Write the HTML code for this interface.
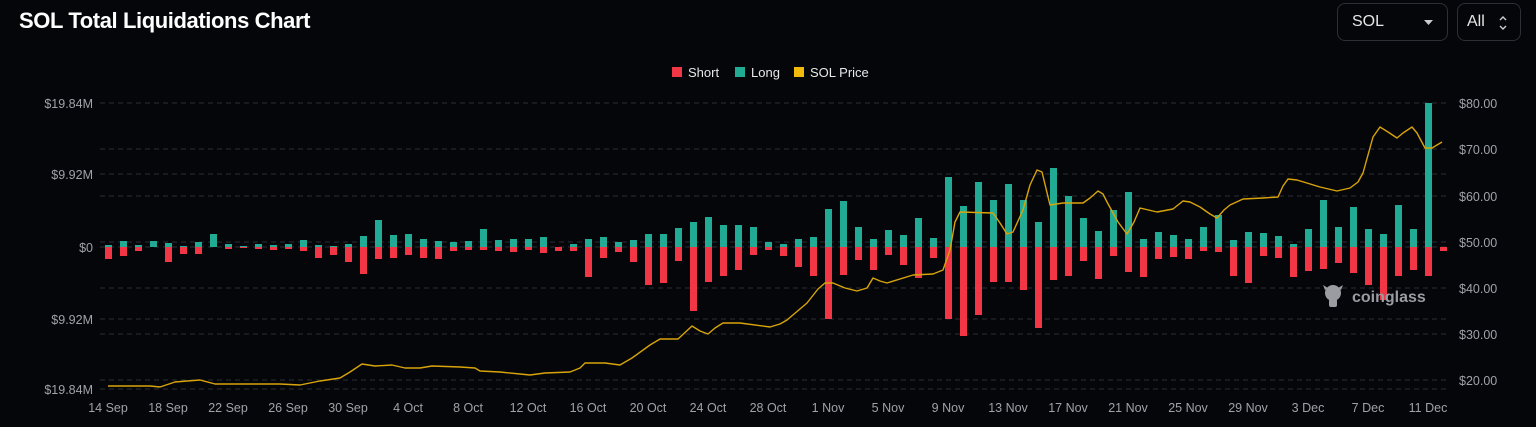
<!DOCTYPE html>
<html><head><meta charset="utf-8"><style>
html,body{margin:0;padding:0;background:#05060a;width:1536px;height:427px;overflow:hidden;font-family:"Liberation Sans",sans-serif}
.t{position:absolute;left:19px;top:8px;color:#fff;font-size:22px;font-weight:bold;letter-spacing:-0.4px}
.box{position:absolute;top:3px;height:38px;border:1px solid #2c2f36;border-radius:8px;box-sizing:border-box;color:#e6e6e6;font-size:16px;line-height:36px}
</style></head><body>
<div class="t">SOL Total Liquidations Chart</div>
<div class="box" style="left:1337px;width:111px;padding-left:14px">SOL<svg style="position:absolute;left:86px;top:16px" width="10" height="6"><path d="M0 0h9L4.5 5z" fill="#ccc"/></svg></div>
<div class="box" style="left:1457px;width:64px;padding-left:9px">All<svg style="position:absolute;left:40px;top:10px" width="10" height="18"><path d="M2 6l3-3 3 3M2 12l3 3 3-3" stroke="#ccc" stroke-width="1.4" fill="none"/></svg></div>
<svg width="1536" height="427" style="position:absolute;left:0;top:0" font-family="Liberation Sans, sans-serif">
<g fill="#e8e8e8" font-size="13">
<rect x="672" y="67" width="10" height="10" fill="#f23645"/><text x="688" y="77">Short</text>
<rect x="735" y="67" width="10" height="10" fill="#22ab94"/><text x="751" y="77">Long</text>
<rect x="794" y="67" width="10" height="10" fill="#f0b90b"/><text x="810" y="77">SOL Price</text>
</g>
<g stroke="#2a2d33" stroke-dasharray="5 4" stroke-width="1">
<path d="M100 103H1448M100 174H1448M100 247H1448M100 319H1448M100 389H1448M100 149H1448M100 196H1448M100 242H1448M100 288H1448M100 334H1448M100 380H1448"/>
</g>
<g fill="#a0a2a8" font-size="12.5" text-anchor="end">
<text x="93" y="108">$19.84M</text><text x="93" y="179">$9.92M</text><text x="93" y="252">$0</text><text x="93" y="324">$9.92M</text><text x="93" y="394">$19.84M</text>
</g>
<g fill="#a0a2a8" font-size="12.5">
<text x="1459" y="108">$80.00</text><text x="1459" y="154">$70.00</text><text x="1459" y="201">$60.00</text><text x="1459" y="247">$50.00</text><text x="1459" y="293">$40.00</text><text x="1459" y="339">$30.00</text><text x="1459" y="385">$20.00</text>
</g>
<g fill="#a0a2a8" font-size="12.5" text-anchor="middle">
<text x="108" y="412">14 Sep</text><text x="168" y="412">18 Sep</text><text x="228" y="412">22 Sep</text><text x="288" y="412">26 Sep</text><text x="348" y="412">30 Sep</text><text x="408" y="412">4 Oct</text><text x="468" y="412">8 Oct</text><text x="528" y="412">12 Oct</text><text x="588" y="412">16 Oct</text><text x="648" y="412">20 Oct</text><text x="708" y="412">24 Oct</text><text x="768" y="412">28 Oct</text><text x="828" y="412">1 Nov</text><text x="888" y="412">5 Nov</text><text x="948" y="412">9 Nov</text><text x="1008" y="412">13 Nov</text><text x="1068" y="412">17 Nov</text><text x="1128" y="412">21 Nov</text><text x="1188" y="412">25 Nov</text><text x="1248" y="412">29 Nov</text><text x="1308" y="412">3 Dec</text><text x="1368" y="412">7 Dec</text><text x="1428" y="412">11 Dec</text>
</g>
<g fill="#22ab94">
<rect x="105" y="245" width="7" height="2"/><rect x="120" y="241" width="7" height="6"/><rect x="135" y="245" width="7" height="2"/><rect x="150" y="241" width="7" height="6"/><rect x="165" y="243" width="7" height="4"/><rect x="180" y="246" width="7" height="1"/><rect x="195" y="242" width="7" height="5"/><rect x="210" y="234" width="7" height="13"/><rect x="225" y="244" width="7" height="3"/><rect x="240" y="246" width="7" height="1"/>
<rect x="255" y="244" width="7" height="3"/><rect x="270" y="245" width="7" height="2"/><rect x="285" y="244" width="7" height="3"/><rect x="300" y="240" width="7" height="7"/><rect x="315" y="245" width="7" height="2"/><rect x="330" y="246" width="7" height="1"/><rect x="345" y="244" width="7" height="3"/><rect x="360" y="236" width="7" height="11"/><rect x="375" y="220" width="7" height="27"/><rect x="390" y="235" width="7" height="12"/>
<rect x="405" y="234" width="7" height="13"/><rect x="420" y="239" width="7" height="8"/><rect x="435" y="241" width="7" height="6"/><rect x="450" y="242" width="7" height="5"/><rect x="465" y="241" width="7" height="6"/><rect x="480" y="229" width="7" height="18"/><rect x="495" y="240" width="7" height="7"/><rect x="510" y="239" width="7" height="8"/><rect x="525" y="239" width="7" height="8"/><rect x="540" y="237" width="7" height="10"/>
<rect x="570" y="244" width="7" height="3"/><rect x="585" y="239" width="7" height="8"/><rect x="600" y="237" width="7" height="10"/><rect x="615" y="242" width="7" height="5"/><rect x="630" y="240" width="7" height="7"/><rect x="645" y="234" width="7" height="13"/><rect x="660" y="234" width="7" height="13"/><rect x="675" y="228" width="7" height="19"/><rect x="690" y="222" width="7" height="25"/><rect x="705" y="217" width="7" height="30"/>
<rect x="720" y="225" width="7" height="22"/><rect x="735" y="225" width="7" height="22"/><rect x="750" y="227" width="7" height="20"/><rect x="765" y="242" width="7" height="5"/><rect x="780" y="244" width="7" height="3"/><rect x="795" y="239" width="7" height="8"/><rect x="810" y="237" width="7" height="10"/><rect x="825" y="209" width="7" height="38"/><rect x="840" y="201" width="7" height="46"/><rect x="855" y="227" width="7" height="20"/>
<rect x="870" y="239" width="7" height="8"/><rect x="885" y="230" width="7" height="17"/><rect x="900" y="235" width="7" height="12"/><rect x="915" y="218" width="7" height="29"/><rect x="930" y="238" width="7" height="9"/><rect x="945" y="177" width="7" height="70"/><rect x="960" y="206" width="7" height="41"/><rect x="975" y="182" width="7" height="65"/><rect x="990" y="200" width="7" height="47"/><rect x="1005" y="184" width="7" height="63"/>
<rect x="1020" y="200" width="7" height="47"/><rect x="1035" y="222" width="7" height="25"/><rect x="1050" y="168" width="7" height="79"/><rect x="1065" y="196" width="7" height="51"/><rect x="1080" y="218" width="7" height="29"/><rect x="1095" y="231" width="7" height="16"/><rect x="1110" y="210" width="7" height="37"/><rect x="1125" y="192" width="7" height="55"/><rect x="1140" y="239" width="7" height="8"/><rect x="1155" y="232" width="7" height="15"/>
<rect x="1170" y="235" width="7" height="12"/><rect x="1185" y="239" width="7" height="8"/><rect x="1200" y="227" width="7" height="20"/><rect x="1215" y="215" width="7" height="32"/><rect x="1230" y="240" width="7" height="7"/><rect x="1245" y="232" width="7" height="15"/><rect x="1260" y="233" width="7" height="14"/><rect x="1275" y="236" width="7" height="11"/><rect x="1290" y="244" width="7" height="3"/><rect x="1305" y="229" width="7" height="18"/>
<rect x="1320" y="200" width="7" height="47"/><rect x="1335" y="227" width="7" height="20"/><rect x="1350" y="207" width="7" height="40"/><rect x="1365" y="229" width="7" height="18"/><rect x="1380" y="234" width="7" height="13"/><rect x="1395" y="205" width="7" height="42"/><rect x="1410" y="229" width="7" height="18"/><rect x="1425" y="103" width="7" height="144"/>
</g>
<g fill="#f23645">
<rect x="105" y="247" width="7" height="12"/><rect x="120" y="247" width="7" height="9"/><rect x="135" y="247" width="7" height="4"/><rect x="165" y="247" width="7" height="15"/><rect x="180" y="247" width="7" height="7"/><rect x="195" y="247" width="7" height="7"/><rect x="225" y="247" width="7" height="2"/><rect x="240" y="247" width="7" height="1"/>
<rect x="255" y="247" width="7" height="2"/><rect x="270" y="247" width="7" height="3"/><rect x="285" y="247" width="7" height="2"/><rect x="300" y="247" width="7" height="4"/><rect x="315" y="247" width="7" height="11"/><rect x="330" y="247" width="7" height="8"/><rect x="345" y="247" width="7" height="15"/><rect x="360" y="247" width="7" height="27"/><rect x="375" y="247" width="7" height="12"/><rect x="390" y="247" width="7" height="11"/>
<rect x="405" y="247" width="7" height="8"/><rect x="420" y="247" width="7" height="11"/><rect x="435" y="247" width="7" height="12"/><rect x="450" y="247" width="7" height="4"/><rect x="465" y="247" width="7" height="3"/><rect x="480" y="247" width="7" height="3"/><rect x="495" y="247" width="7" height="4"/><rect x="510" y="247" width="7" height="5"/><rect x="525" y="247" width="7" height="3"/><rect x="540" y="247" width="7" height="6"/>
<rect x="555" y="247" width="7" height="4"/><rect x="570" y="247" width="7" height="4"/><rect x="585" y="247" width="7" height="30"/><rect x="600" y="247" width="7" height="11"/><rect x="615" y="247" width="7" height="5"/><rect x="630" y="247" width="7" height="15"/><rect x="645" y="247" width="7" height="38"/><rect x="660" y="247" width="7" height="36"/><rect x="675" y="247" width="7" height="14"/><rect x="690" y="247" width="7" height="64"/>
<rect x="705" y="247" width="7" height="35"/><rect x="720" y="247" width="7" height="29"/><rect x="735" y="247" width="7" height="23"/><rect x="750" y="247" width="7" height="8"/><rect x="765" y="247" width="7" height="3"/><rect x="780" y="247" width="7" height="9"/><rect x="795" y="247" width="7" height="20"/><rect x="810" y="247" width="7" height="29"/><rect x="825" y="247" width="7" height="72"/><rect x="840" y="247" width="7" height="28"/>
<rect x="855" y="247" width="7" height="13"/><rect x="870" y="247" width="7" height="23"/><rect x="885" y="247" width="7" height="8"/><rect x="900" y="247" width="7" height="18"/><rect x="915" y="247" width="7" height="31"/><rect x="930" y="247" width="7" height="11"/><rect x="945" y="247" width="7" height="72"/><rect x="960" y="247" width="7" height="89"/><rect x="975" y="247" width="7" height="68"/><rect x="990" y="247" width="7" height="35"/>
<rect x="1005" y="247" width="7" height="35"/><rect x="1020" y="247" width="7" height="43"/><rect x="1035" y="247" width="7" height="81"/><rect x="1050" y="247" width="7" height="33"/><rect x="1065" y="247" width="7" height="29"/><rect x="1080" y="247" width="7" height="14"/><rect x="1095" y="247" width="7" height="32"/><rect x="1110" y="247" width="7" height="9"/><rect x="1125" y="247" width="7" height="25"/><rect x="1140" y="247" width="7" height="30"/>
<rect x="1155" y="247" width="7" height="12"/><rect x="1170" y="247" width="7" height="10"/><rect x="1185" y="247" width="7" height="12"/><rect x="1200" y="247" width="7" height="4"/><rect x="1215" y="247" width="7" height="5"/><rect x="1230" y="247" width="7" height="29"/><rect x="1245" y="247" width="7" height="36"/><rect x="1260" y="247" width="7" height="9"/><rect x="1275" y="247" width="7" height="11"/><rect x="1290" y="247" width="7" height="30"/>
<rect x="1305" y="247" width="7" height="24"/><rect x="1320" y="247" width="7" height="22"/><rect x="1335" y="247" width="7" height="16"/><rect x="1350" y="247" width="7" height="26"/><rect x="1365" y="247" width="7" height="38"/><rect x="1380" y="247" width="7" height="53"/><rect x="1395" y="247" width="7" height="29"/><rect x="1410" y="247" width="7" height="23"/><rect x="1425" y="247" width="7" height="29"/><rect x="1440" y="247" width="7" height="4"/>
</g>
<path fill="none" stroke="#d9a40a" stroke-width="1.4" stroke-linejoin="round" d="M108 386 L150 386 L160 387 L175 382 L200 380 L215 384 L260 384 L280 384 L300 385 L320 381 L340 378 L350 372 L362 364 L375 366 L392 365 L405 368 L420 368 L432 366 L460 367 L475 368 L480 371 L500 372 L520 374 L530 375 L545 373 L570 372 L580 368 L585 363 L605 363 L620 365 L632 358 L650 345 L660 339 L678 339 L692 326 L700 331 L708 334 L715 328 L723 323 L740 323 L770 327 L780 324 L787 320 L807 303 L818 289 L825 283 L833 283 L845 288 L857 291 L867 288 L873 278 L880 281 L887 283 L913 275 L933 274 L943 270 L950 250 L955 222 L960 212 L993 213 L1000 223 L1007 234 L1013 232 L1023 210 L1030 185 L1037 170 L1042 172 L1050 205 L1063 203 L1083 203 L1090 198 L1098 191 L1103 194 L1107 202 L1118 222 L1127 234 L1134 222 L1140 208 L1157 212 L1173 209 L1183 201 L1190 202 L1200 207 L1210 214 L1217 218 L1224 210 L1230 205 L1243 199 L1263 198 L1278 197 L1283 186 L1288 179 L1297 180 L1320 187 L1337 191 L1350 188 L1358 182 L1363 173 L1373 137 L1380 127 L1388 132 L1397 138 L1403 133 L1412 127 L1417 133 L1425 148 L1432 148 L1442 142"/>
<g fill="#9a9ca2">
<circle cx="1333" cy="293" r="8"/><path d="M1323 285l5 3-3 2zM1343 285l-5 3 3 2z"/><rect x="1329" y="299" width="8" height="8" rx="2"/>
<text x="1352" y="302" font-size="16" font-weight="bold">coinglass</text>
</g>
</svg>
</body></html>
